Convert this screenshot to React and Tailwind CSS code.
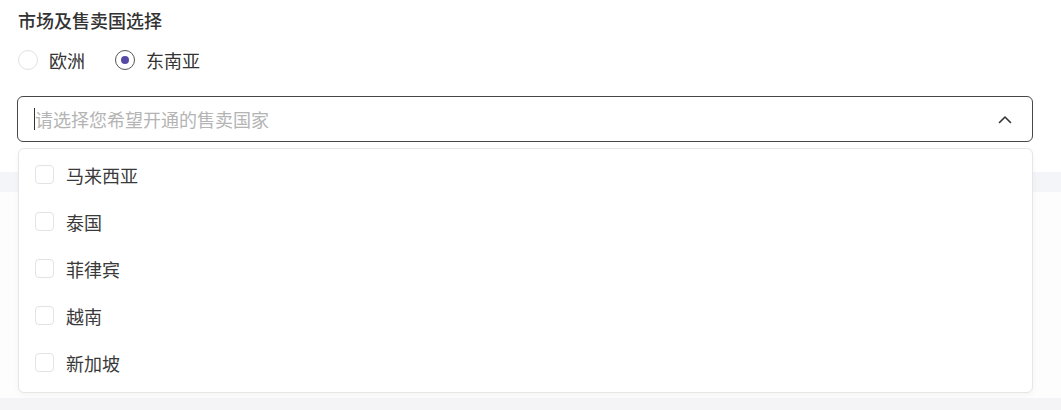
import { useState } from "react";

const countries = ["马来西亚", "泰国", "菲律宾", "越南", "新加坡"];

function Radio({ checked, label }) {
  return (
    <label className="flex items-center gap-[11px]">
      <span
        className={`w-[20px] h-[20px] rounded-full border flex items-center justify-center bg-white ${
          checked ? "border-[#555]" : "border-[#e2e2e2]"
        }`}
      >
        {checked && <span className="w-[8px] h-[8px] rounded-full bg-[#574aa6]" />}
      </span>
      <span className="text-[18px] leading-[24px] text-[#333]">{label}</span>
    </label>
  );
}

export default function App() {
  const [region] = useState("sea");

  return (
    <div
      className="w-[1061px] h-[410px] relative overflow-hidden bg-white flex flex-col"
      style={{ fontFamily: '"Noto Sans CJK SC", "Noto Sans", sans-serif' }}
    >
      {/* form section */}
      <div className="h-[172px] shrink-0 pt-[8px] relative z-10">
        <div className="pl-[18px] text-[18px] leading-[24px] font-medium text-[#333]">
          市场及售卖国选择
        </div>
        <div className="flex items-center gap-[30px] pl-[18px] mt-[16px]">
          <Radio checked={region === "eu"} label="欧洲" />
          <Radio checked={region === "sea"} label="东南亚" />
        </div>

        {/* select */}
        <div className="relative ml-[17px] w-[1016px] mt-[24px]">
          <div className="h-[46px] rounded-[6px] border border-[#474747] flex items-center pl-[16px] pr-[18px] bg-white">
            <span className="w-px h-[22px] bg-[#333]" />
            <span className="text-[18px] leading-[24px] text-[#b4b4b4] flex-1">
              请选择您希望开通的售卖国家
            </span>
            <svg width="14" height="9" viewBox="0 0 14 9" fill="none" className="mr-[2px]">
              <path d="M1.5 7.5 L7 2 L12.5 7.5" stroke="#333" strokeWidth="1.6" strokeLinecap="round" strokeLinejoin="round" />
            </svg>
          </div>

          {/* dropdown */}
          <div className="absolute left-[1px] right-0 top-full mt-[6px] bg-white border border-[#e6e6e6] rounded-[6px] shadow-[0_2px_6px_rgba(0,0,0,0.04)] pt-[2px] pb-[6px]">
            {countries.map((c) => (
              <div key={c} className="h-[47px] flex items-center pl-[16px] gap-[12px]">
                <span className="w-[19px] h-[19px] rounded-[4px] border border-[#e3e3e3] bg-white" />
                <span className="text-[18px] leading-[24px] text-[#3a3a3a]">{c}</span>
              </div>
            ))}
          </div>
        </div>
      </div>

      {/* page background behind the dropdown */}
      <div className="h-[20px] shrink-0 bg-[#f4f5f8]" />
      <div className="h-[206px] shrink-0 bg-[#fdfdfe]" />
      <div className="flex-1 bg-[#f4f4f7]" />
    </div>
  );
}
